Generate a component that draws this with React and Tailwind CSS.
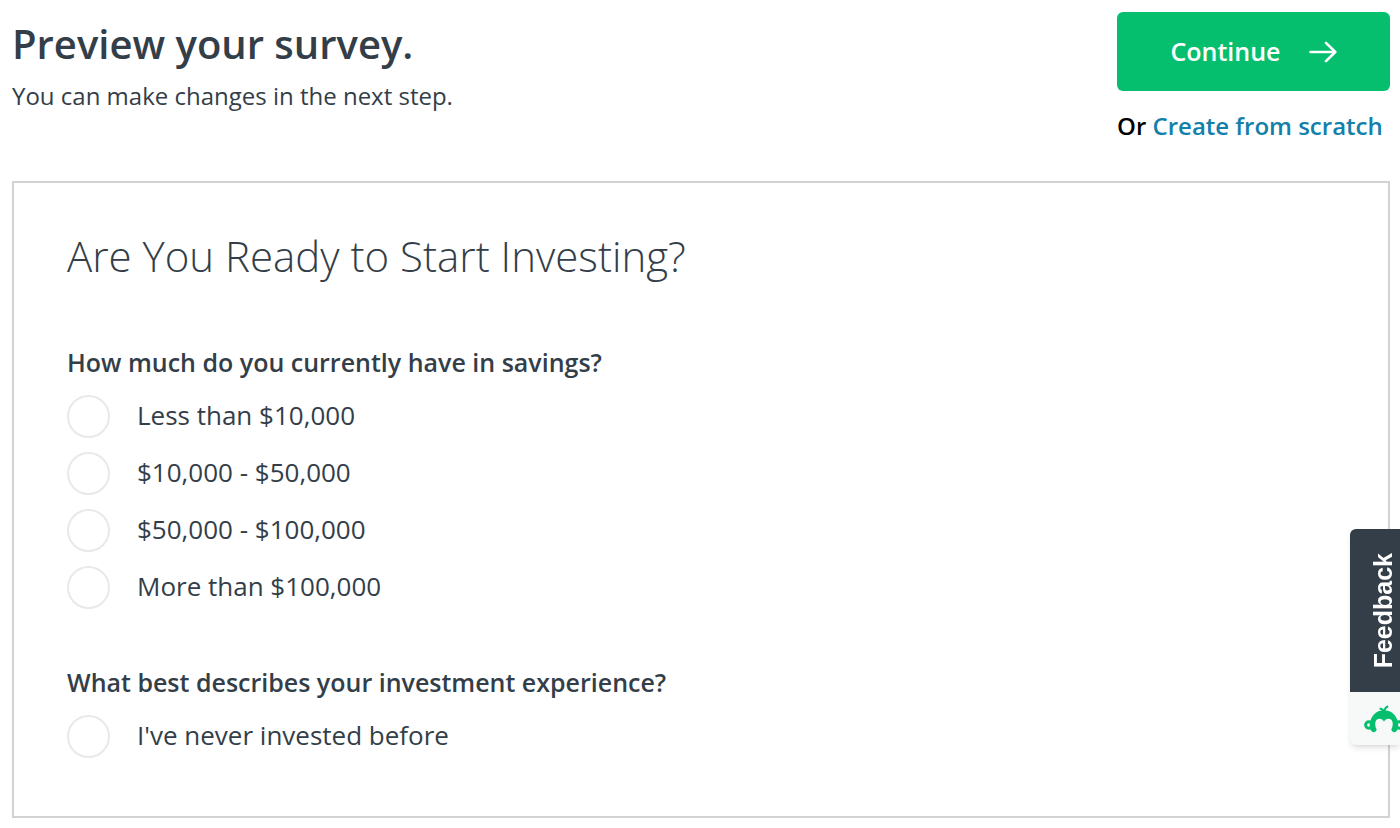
import React, { useState } from 'react';

const questions = [
  {
    id: 'savings',
    title: 'How much do you currently have in savings?',
    options: ['Less than $10,000', '$10,000 - $50,000', '$50,000 - $100,000', 'More than $100,000'],
  },
  {
    id: 'experience',
    title: 'What best describes your investment experience?',
    options: ["I've never invested before"],
  },
];

function ArrowIcon() {
  return (
    <svg className="h-6 w-7" viewBox="0 0 28 24" fill="none" stroke="currentColor" strokeWidth="2.6" strokeLinecap="round" strokeLinejoin="round" aria-hidden="true">
      <path d="M1.5 12H26.3M17 2.8L26.3 12L17 21.2" />
    </svg>
  );
}

function MonkeyLogo() {
  return (
    <svg className="h-7 w-10 shrink-0" viewBox="0 0 40 28" fill="none" aria-hidden="true">
      <path
        d="M7 25.6C5.8 23.4 5.4 20.4 6 17.4C7.6 9.8 13 5.2 20 5.2C27 5.2 32.4 9.8 34 17.4C34.6 20.4 34.2 23.4 33 25.6C31.4 28 28.2 27.6 27.2 24.6C29.6 21.4 29.6 14 25 13.8C22.6 13.7 20.8 15 20 16.8C19.2 15 17.4 13.7 15 13.8C10.4 14 10.4 21.4 12.8 24.6C11.8 27.6 8.6 28 7 25.6Z"
        fill="#05bf6f"
      />
      <circle cx="4.8" cy="20" r="3.2" stroke="#05bf6f" strokeWidth="3" />
      <circle cx="35.2" cy="20" r="3.2" stroke="#05bf6f" strokeWidth="3" />
      <path d="M20.4 7C20.4 4.3 21.8 2 24.2 1.2M19.8 7C19.3 5 17.8 3.7 15.6 3.5" stroke="#05bf6f" strokeWidth="2" />
    </svg>
  );
}

function Question({ question, value, onChange }) {
  return (
    <fieldset>
      <legend className="mb-4 text-[25px] leading-[34px] font-semibold">{question.title}</legend>
      <div className="flex flex-col gap-3.5">
        {question.options.map((option) => (
          <label key={option} className="flex items-start gap-[27px] text-[26px] leading-10">
            <input
              type="radio"
              name={question.id}
              value={option}
              checked={value === option}
              onChange={() => onChange(option)}
              className="size-[43px] shrink-0 appearance-none rounded-full border-2 border-[#e8e9ea] bg-white checked:border-[12px] checked:border-[#05bf6f]"
            />
            {option}
          </label>
        ))}
      </div>
    </fieldset>
  );
}

export default function App() {
  const [answers, setAnswers] = useState({});

  return (
    <div className="min-h-screen bg-white pt-3 pr-2.5 pb-2.5 pl-3 font-['Open_Sans',sans-serif] text-[#333e48]">
      <header className="flex items-start justify-between pb-[37px]">
        <div className="pt-0.5">
          <h1 className="text-[40px] leading-[60px] font-semibold">Preview your survey.</h1>
          <p className="pt-1 text-[24px] leading-9">You can make changes in the next step.</p>
        </div>
        <div className="w-[273px]">
          <button type="button" className="flex h-[79px] w-full items-center justify-center gap-7 rounded-md bg-[#05bf6f] text-[25px] font-semibold text-white">
            Continue
            <ArrowIcon />
          </button>
          <p className="pt-[17px] text-[24px] leading-9 font-semibold whitespace-nowrap text-black">
            Or <a href="#scratch" className="text-[#1180ab]">Create from scratch</a>
          </p>
        </div>
      </header>

      <main className="border-2 border-[#d0d2d3] px-[53px] pt-[43px] pb-[58px]">
        <h2 className="mb-[59px] text-[42px] leading-[60px] font-light">Are You Ready to Start Investing?</h2>
        <div className="flex flex-col gap-14">
          {questions.map((q) => (
            <Question
              key={q.id}
              question={q}
              value={answers[q.id]}
              onChange={(option) => setAnswers({ ...answers, [q.id]: option })}
            />
          ))}
        </div>
      </main>

      <button type="button" className="fixed top-[529px] right-0 w-[50px] overflow-hidden rounded-l-md bg-[#f7f9f9] shadow-md">
        <span className="flex h-[163px] items-center justify-center bg-[#333e48] pl-4">
          <span className="rotate-180 font-['Liberation_Sans',sans-serif] text-[25px] leading-8 font-bold text-white [writing-mode:vertical-rl]">Feedback</span>
        </span>
        <span className="flex h-[53px] items-center pl-3.5">
          <MonkeyLogo />
        </span>
      </button>
    </div>
  );
}
